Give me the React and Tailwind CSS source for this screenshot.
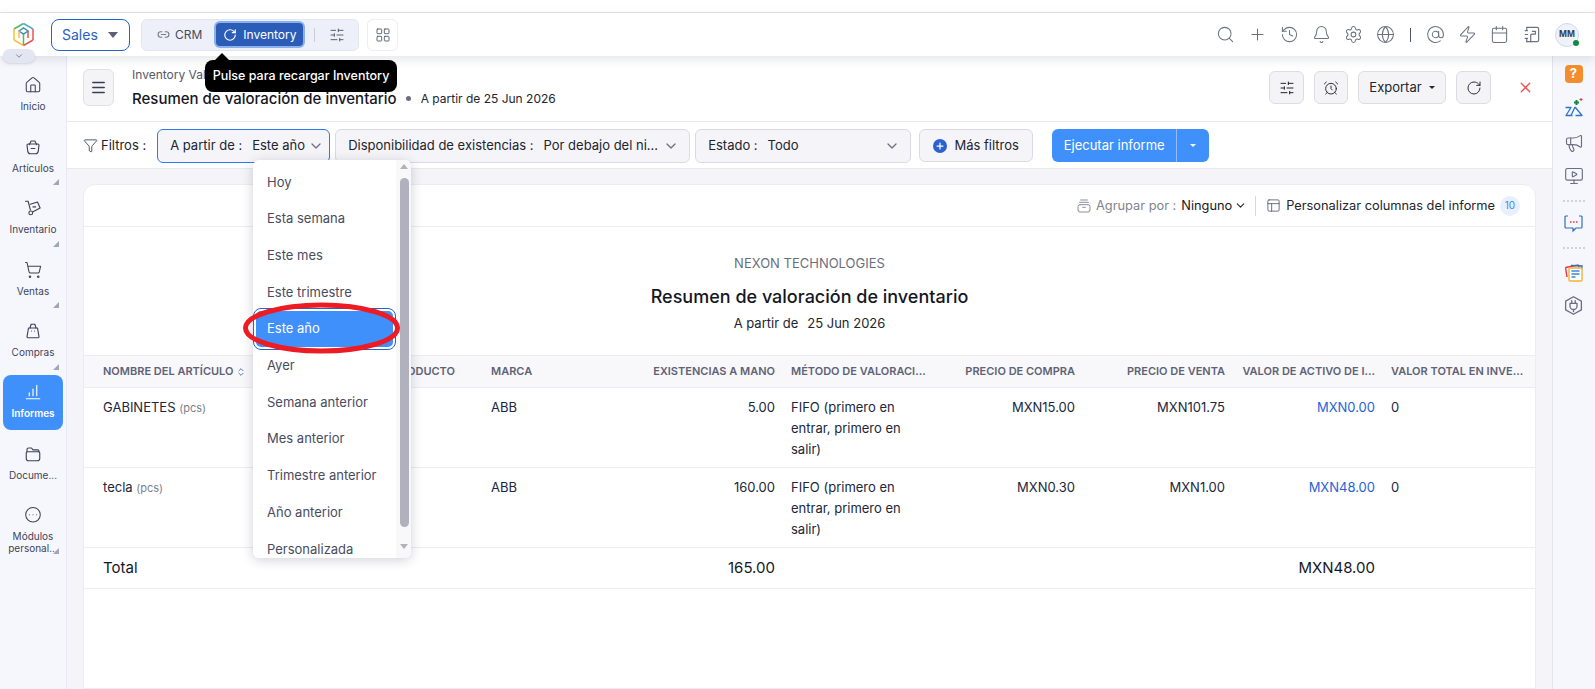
import React from "react";
import { Search, Plus, History, Bell, Settings, Globe, AtSign, Zap, Calendar, Home, ShoppingCart, CircleEllipsis, ChevronDown, ChevronsUpDown, Menu, SlidersHorizontal, AlarmClock, RotateCw, X, Filter, Link2, LayoutGrid, Megaphone, MonitorPlay, PanelsTopLeft } from "lucide-react";

const F = { fontFamily: "Inter, 'Noto Sans', sans-serif" };

const S = ({ children, size = 18, className = "" }) => (
  <svg width={size} height={size} viewBox="0 0 24 24" fill="none" stroke="currentColor" strokeWidth="1.5" strokeLinecap="round" strokeLinejoin="round" className={className}>{children}</svg>
);
const Basket = (p) => <S {...p}><path d="M7 9 9.5 4h5L17 9" /><path d="M4 9.5C4 8.7 4.7 8 5.5 8h13c.8 0 1.5.7 1.5 1.5l-1 8C18.800 19.5 17.5 21 15.5 21h-7C6.5 21 5.200 19.5 5 17.5Z" /><path d="M9.5 14h5" /></S>;
const Truck = (p) => <S {...p}><path d="M2 3h3.5l3 11.5" /><circle cx="9" cy="18.5" r="2.5" /><path d="M8.5 7 18 4l3.5 8-9.5 5" /><path d="M12 10.5h3.5" /></S>;
const Bag = (p) => <S {...p}><path d="M8 8 9.5 3h5L16 8" /><path d="M6 8h12l2 11.5A1.5 1.5 0 0 1 18.5 21h-13A1.5 1.5 0 0 1 4 19.5Z" /><path d="M10 12h.01M14 12h.01" /></S>;
const Bars = (p) => <S {...p}><path d="M3 21h18M7 17v-4M12 17V8M17 17V3" /></S>;
const FolderI = (p) => <S {...p}><path d="M4 9V6a2 2 0 0 1 2-2h4l2 2.5h6a2 2 0 0 1 2 2V9" /><path d="M3 10.5A1.5 1.5 0 0 1 4.5 9h15a1.5 1.5 0 0 1 1.5 1.5V18a3 3 0 0 1-3 3H6a3 3 0 0 1-3-3Z" /></S>;
const Note = (p) => <S {...p}><path d="M6 3h13a2 2 0 0 1 2 2v14a2 2 0 0 1-2 2H6" /><path d="M4 7h3M4 12h3M4 17h3M6 3v3M6 18v3" /><path d="M11 21v-8c0-1 .8-1.5 1.5-1.5H17V8h-4" /></S>;
const Drawer = (p) => <S {...p}><path d="M7 3h10M5.5 6.5h13" /><rect x="3" y="10" width="18" height="11" rx="3" /><path d="M10 14h4" /></S>;
const HexPlug = (p) => <S {...p}><path d="M12 2 21 7v10l-9 5-9-5V7Z" /><path d="M8 9.5h8v3a4 4 0 0 1-8 0ZM10 6.5v3M14 6.5v3M12 16.5V19" /></S>;

function NavItem({ icon: I, label, corner, active, two }) {
  return (
    <div className={`relative mx-[3px] flex flex-col items-center rounded-lg ${active ? "bg-[#4090fb] text-white font-semibold h-[55px] pt-[8px] mt-[5px] mb-[1px]" : "text-[#3f4359] pt-[14px] h-[61.5px]"}`}>
      <I size={18} strokeWidth={1.4} className={active ? "text-white" : "text-[#3d4156]"} />
      <div className="mt-[6px] text-[10px] leading-[12px] text-center">{label}</div>
      {two && <div className="text-[10px] leading-[12px] text-center">{two}</div>}
      {corner && <div className="absolute right-[4px] bottom-[0px] w-0 h-0 border-l-[6px] border-l-transparent border-b-[6px] border-b-[#9ea6b8]" />}
    </div>
  );
}

function Caret() {
  return <span className="inline-block w-0 h-0 border-x-[3px] border-x-transparent border-t-[3px] border-t-current" />;
}

function IconBtn({ children, w = "w-[35px]" }) {
  return <div className={`${w} h-[33px] flex items-center justify-center rounded-md border border-[#dcdde4] bg-[#f4f4f6] text-[#22242e]`}>{children}</div>;
}

function FilterBox({ className, label, value }) {
  return (
    <div className={`h-[34px] flex items-center justify-between rounded-md border border-[#d9dae3] bg-[#f5f5f9] pl-3 pr-[10px] text-[13px] text-[#22242e] ${className}`}>
      <span className="whitespace-nowrap">{label}<span className="ml-[10px]">{value}</span></span>
      <ChevronDown size={16} className="text-[#70737f] shrink-0" />
    </div>
  );
}

const cols = "grid grid-cols-[399px_300px_152px_148px_150px_150px_155px]";

function Row({ name, stock, buy, sell, asset, total }) {
  return (
    <div className={`${cols} h-[80px] border-b border-[#ecedf2] text-[13px] leading-[21px] text-[#21263c] pt-[9px]`}>
      <div className="pl-[19px]">{name} <span className="text-[11px] text-[#7b7f8f]">(pcs)</span></div>
      <div className="flex justify-between pr-2">
        <span className="pl-[8px]">ABB</span>
        <span>{stock}</span>
      </div>
      <div className="pl-2 pr-[24px]">FIFO (primero en entrar, primero en salir)</div>
      <div className="text-right pr-2">{buy}</div>
      <div className="text-right pr-2">{sell}</div>
      <div className="text-right pr-2 text-[#2563d6]">{asset}</div>
      <div className="pl-2">{total}</div>
    </div>
  );
}

export default function App() {
  const items = ["Hoy", "Esta semana", "Este mes", "Este trimestre", "Este año", "Ayer", "Semana anterior", "Mes anterior", "Trimestre anterior", "Año anterior", "Personalizada"];
  return (
    <div style={F} className="relative w-[1595px] h-[689px] overflow-hidden bg-white">
      <div className="h-[13px] border-b border-[#e4e4e8]" />
      {/* top bar */}
      <header className="relative z-20 h-[43px] flex items-center bg-white shadow-[0_3px_10px_rgba(40,45,70,0.13)]">
        <div className="w-[51px] flex justify-center pr-[4px] -mt-[1px]">
          <svg width="23" height="25" viewBox="0 0 23 25" fill="none" strokeWidth="1.5">
            <path d="M11.5 1.5 21 7" stroke="#5aa6c9" />
            <path d="M11.5 1.5 2 7" stroke="#53b567" />
            <path d="M2 7V18" stroke="#f0c23e" />
            <path d="M2 18 11.5 23.5" stroke="#f0c23e" />
            <path d="M11.5 23.5 21 18" stroke="#e8554e" />
            <path d="M21 7V18" stroke="#e8554e" />
            <path d="M7 9 11.5 6 16 9 11.5 12Z" stroke="#3f8fb0" />
            <path d="M11.5 12V23" stroke="#53b567" />
            <path d="M7 9v7" stroke="#f0c23e" />
            <path d="M16 9v7" stroke="#e8554e" />
          </svg>
        </div>
        <div className="w-[79px] h-[32px] flex items-center justify-between rounded-lg border border-[#2563c9] px-[10px] text-[14px] text-[#2b62c0]">
          Sales
          <span className="w-0 h-0 mr-[1px] border-x-[5px] border-x-transparent border-t-[6px] border-t-[#5c6072]" />
        </div>
        <div className="ml-[11px] w-[218px] h-[32px] flex items-center rounded-md bg-[#edf0f9] border border-[#e2e6f3] text-[12px] text-[#484c5e]">
          <Link2 size={13} className="ml-[15px] text-[#777b8b]" />
          <span className="ml-[5px]">CRM</span>
          <div className="ml-[14px] w-[87px] h-[23px] flex items-center rounded-[4px] bg-[#2b5cb8] ring-2 ring-[#8db0ea] text-white">
            <RotateCw size={14} strokeWidth={2} className="ml-[7px] mr-[6px]" />
            Inventory
          </div>
          <div className="ml-[11px] h-[14px] w-px bg-[#c8ccd8]" />
          <SlidersHorizontal size={16} strokeWidth={1.4} className="ml-[14px] text-[#50546a]" />
        </div>
        <div className="ml-[8px] w-[31px] h-[32px] flex items-center justify-center rounded-md border border-[#eeeef2]">
          <LayoutGrid size={16} strokeWidth={1.3} className="text-[#4e5265]" />
        </div>
        <div className="ml-auto flex items-center gap-[13px] pr-[16px] text-[#6e7280]">
          <Search size={19} strokeWidth={1.3} />
          <Plus size={19} strokeWidth={1.3} />
          <History size={19} strokeWidth={1.3} />
          <Bell size={19} strokeWidth={1.3} />
          <Settings size={19} strokeWidth={1.3} />
          <Globe size={19} strokeWidth={1.3} />
          <div className="mx-[2px] w-px h-[14px] bg-[#50546a]" />
          <AtSign size={19} strokeWidth={1.3} />
          <Zap size={19} strokeWidth={1.3} />
          <Calendar size={19} strokeWidth={1.3} />
          <Note size={19} />
          <div className="relative ml-[1px] w-[24px] h-[24px] rounded-full bg-[#eef2fb] border border-[#cfd9f0] flex items-center justify-center text-[8.5px] font-bold text-[#3a3e50]">
            MM
            <span className="absolute right-[-1px] bottom-[0px] w-[6px] h-[6px] rounded-full bg-[#0f8a45]" />
          </div>
        </div>
      </header>

      <div className="flex h-[633px]">
        {/* left nav */}
        <aside className="relative w-[67px] shrink-0 bg-[#f6f7fd] border-r border-[#e8e9f4] pt-[6px]">
          <div className="absolute left-[3px] -top-[7px] z-30 w-[32px] h-[14px] rounded-full bg-[#e2e6f2] shadow-sm flex items-center justify-center">
            <ChevronDown size={10} className="text-[#70737f]" />
          </div>
          <NavItem icon={Home} label="Inicio" />
          <NavItem icon={Basket} label="Artículos" corner />
          <NavItem icon={Truck} label="Inventario" corner />
          <NavItem icon={ShoppingCart} label="Ventas" corner />
          <NavItem icon={Bag} label="Compras" corner />
          <NavItem icon={Bars} label="Informes" active />
          <NavItem icon={FolderI} label="Docume..." />
          <NavItem icon={CircleEllipsis} label="Módulos" two="personal..." corner />
        </aside>

        {/* main */}
        <main className="flex-1 min-w-0 flex flex-col">
          <div className="h-[66px] shrink-0 flex items-center border-b border-[#e8e9f0] pl-[16px] pr-[18px] pb-[2px]">
            <div className="w-[31px] h-[37px] flex items-center justify-center rounded-md border border-[#e0e1e6] bg-[#f4f4f6]">
              <Menu size={17} strokeWidth={2.2} className="text-[#3a3d55]" />
            </div>
            <div className="ml-[18px]">
              <div className="text-[12px] leading-[16px] text-[#555868]">Inventory Valuation Summary</div>
              <div className="mt-[6px] flex items-center leading-[20px]">
                <span className="text-[15px] font-medium text-[#15171f]">Resumen de valoración de inventario</span>
                <span className="ml-[9px] w-[5px] h-[5px] rounded-full bg-[#6b6f7d]" />
                <span className="ml-[10px] text-[12px] text-[#22242e]">A partir de 25 Jun 2026</span>
              </div>
            </div>
            <div className="ml-auto flex items-center">
              <IconBtn><SlidersHorizontal size={16} strokeWidth={1.5} /></IconBtn>
              <div className="ml-[10px]"><IconBtn w="w-[34px]"><AlarmClock size={16} strokeWidth={1.4} /></IconBtn></div>
              <div className="ml-[10px]">
                <IconBtn w="w-[88px]"><span className="text-[13px]">Exportar</span><span className="ml-[7px] flex"><Caret /></span></IconBtn>
              </div>
              <div className="ml-[10px]"><IconBtn w="w-[35px]"><RotateCw size={16} strokeWidth={1.4} /></IconBtn></div>
              <X size={17} strokeWidth={1.8} className="ml-[26px] text-[#ee4b50]" />
            </div>
          </div>

          <div className="h-[47px] shrink-0 flex items-center border-b border-[#e8e9f0] pl-[16px] pt-[1px]">
            <Filter size={15} strokeWidth={1.4} className="text-[#3a3d55]" />
            <span className="ml-[3px] text-[13px] text-[#22242e]">Filtros :</span>
            <FilterBox className="ml-[11px] w-[173px] !border-[#2b7af0] !pr-[5px]" label="A partir de :" value="Este año" />
            <FilterBox className="ml-[5px] w-[355px]" label="Disponibilidad de existencias :" value="Por debajo del ni..." />
            <FilterBox className="ml-[5px] w-[216px]" label="Estado :" value="Todo" />
            <div className="ml-[8px] w-[114px] h-[33px] flex items-center justify-center rounded-md border border-[#d9dae3] bg-[#f5f5f9] text-[13px] text-[#22242e]">
              <span className="w-[14px] h-[14px] mr-[7px] rounded-full bg-[#2b62d0] flex items-center justify-center">
                <Plus size={10} strokeWidth={3} className="text-white" />
              </span>
              Más filtros
            </div>
            <div className="ml-[19px] w-[157px] h-[33px] flex items-center rounded-md bg-[#4090fb] text-[13px] text-white">
              <span className="w-[125px] text-center border-r border-[#8fbdfb] leading-[33px]">Ejecutar informe</span>
              <span className="flex-1 flex justify-center"><Caret /></span>
            </div>
          </div>

          <div className="flex-1 min-h-0 bg-[#f4f4f9] px-[16px] pt-[15px]">
            <div className="h-full rounded-t-xl border border-[#ecedf2] bg-white">
              <div className="h-[42px] flex items-center justify-end border-b border-[#ecedf2] pr-[15px] text-[12.8px]">
                <Drawer size={16} className="text-[#8b8e9c] mr-[4px]" />
                <span className="text-[#80838f]">Agrupar por :</span>
                <span className="ml-[5px] text-[#15171f]">Ninguno</span>
                <ChevronDown size={13} className="ml-[2px] text-[#22242e]" />
                <div className="ml-[8px] mr-[10px] h-[20px] w-px bg-[#d5d7e0]" />
                <PanelsTopLeft size={15} strokeWidth={1.3} className="mr-[5px] text-[#50546a]" />
                <span className="text-[#22242e]">Personalizar columnas del informe</span>
                <span className="ml-[5px] w-[20px] h-[20px] flex items-center justify-center rounded-full bg-[#e8f0fd] text-[10px] text-[#3f86f0]">10</span>
              </div>

              <div className="h-[128px] flex flex-col items-center">
                <div className="mt-[28px] text-[13px] leading-[16px] text-[#6b6f7e]">NEXON TECHNOLOGIES</div>
                <div className="mt-[14px] text-[18px] leading-[24px] font-medium text-[#15171f]">Resumen de valoración de inventario</div>
                <div className="mt-[6px] text-[13px] leading-[16px] text-[#22242e]">A partir de<span className="ml-[9px]">25 Jun 2026</span></div>
              </div>

              <div className={`${cols} h-[33px] items-center border-y border-[#ecedf2] bg-[#f8f8fb] text-[11px] font-semibold text-[#5f6275]`}>
                <div className="pl-[19px] flex items-center justify-between pr-[28px]">
                  <span className="flex items-center gap-[3px]">NOMBRE DEL ARTÍCULO <ChevronsUpDown size={10} className="text-[#3d5a9e]" /></span>
                  <span>PRODUCTO</span>
                </div>
                <div className="flex justify-between pr-2">
                  <span className="pl-[8px]">MARCA</span>
                  <span>EXISTENCIAS A MANO</span>
                </div>
                <div className="px-2 whitespace-nowrap">MÉTODO DE VALORACI...</div>
                <div className="text-right pr-2">PRECIO DE COMPRA</div>
                <div className="text-right pr-2">PRECIO DE VENTA</div>
                <div className="text-right pr-2 whitespace-nowrap">VALOR DE ACTIVO DE I...</div>
                <div className="pl-2 whitespace-nowrap">VALOR TOTAL EN INVE...</div>
              </div>
              <Row name="GABINETES" stock="5.00" buy="MXN15.00" sell="MXN101.75" asset="MXN0.00" total="0" />
              <Row name="tecla" stock="160.00" buy="MXN0.30" sell="MXN1.00" asset="MXN48.00" total="0" />
              <div className={`${cols} h-[41px] items-center border-b border-[#ecedf2] text-[15px] text-[#15171f]`}>
                <div className="pl-[19px]">Total</div>
                <div className="text-right pr-2">165.00</div>
                <div /><div /><div />
                <div className="text-right pr-2">MXN48.00</div>
                <div />
              </div>
            </div>
          </div>
        </main>

        {/* right rail */}
        <aside className="w-[43px] shrink-0 bg-[#f6f7fd] border-l border-[#e3e4ee] flex flex-col items-center pt-[9px] pr-[1px] text-[#6b6f85]">
          <div className="w-[18px] h-[18px] rounded-[4px] bg-[#f58d2e] flex items-center justify-center text-[13px] font-bold text-white">?</div>
          <svg className="mt-[15px]" width="20" height="20" viewBox="0 0 20 20" fill="none">
            <path d="M1.5 9.5H7L2 17.5H8.5M11 9l-4 8.5M11 9l7 8.5H11.5" stroke="#2f74c4" strokeWidth="1.3" strokeLinejoin="round" />
            <path d="M10 4.5h5M12.5 2v5" stroke="#0f8a45" strokeWidth="2" />
            <path d="M15.5 1.5h3M17 0v3" stroke="#e8343c" strokeWidth="1" />
          </svg>
          <Megaphone size={20} strokeWidth={1.4} className="mt-[15px]" />
          <MonitorPlay size={20} strokeWidth={1.4} className="mt-[13px]" />
          <div className="mt-[14px] w-[22px] border-t-2 border-dotted border-[#cfd1dc]" />
          <svg className="mt-[12px]" width="19" height="19" viewBox="0 0 19 19" fill="none">
            <path d="M4 2H2a1 1 0 0 0-1 1v10a1 1 0 0 0 1 1h7v3l3-3h5a1 1 0 0 0 1-1V3a1 1 0 0 0-1-1h-2" stroke="#2f6fc0" strokeWidth="1.2" />
            <path d="M6 8h1.5M9 8h1.5M12 8h1.5" stroke="#e8343c" strokeWidth="1.6" />
          </svg>
          <div className="mt-[14px] w-[22px] border-t-2 border-dotted border-[#cfd1dc]" />
          <svg className="mt-[14px]" width="20" height="19" viewBox="0 0 20 19" fill="none">
            <path d="M1.5 4.5 14 2l1 2" stroke="#e8343c" strokeWidth="1.4" />
            <path d="M1.5 4.5 3 14" stroke="#e8343c" strokeWidth="1.4" />
            <path d="M7 2.5 18 3l-.5 4" stroke="#2f6fc0" strokeWidth="1.4" />
            <rect x="5" y="5" width="13" height="13" rx="1" fill="#fff" stroke="#f2b33a" strokeWidth="1.4" />
            <path d="M7.5 8h8M7.5 11h8M7.5 14h4" stroke="#3f86d8" strokeWidth="1.6" />
          </svg>
          <HexPlug size={21} className="mt-[13px]" />
        </aside>
      </div>

      {/* tooltip */}
      <div className="absolute z-40 left-[205px] top-[60px] w-[192px] h-[32px] rounded-lg bg-black text-white text-[12.5px] font-medium flex items-center justify-center whitespace-nowrap">
        <span className="absolute left-[10px] -top-[7px] w-0 h-0 border-x-[7px] border-x-transparent border-b-[7px] border-b-black" />
        Pulse para recargar Inventory
      </div>

      {/* dropdown */}
      <div className="absolute z-30 left-[253px] top-[160px] w-[158px] h-[398px] overflow-hidden rounded-md bg-white shadow-[0_2px_12px_rgba(40,45,70,0.22)]">
        <div className="absolute right-0 top-0 bottom-0 w-[15px] bg-[#f8f8fb]" />
        <div className="absolute right-[2px] top-[18px] w-[9px] h-[349px] rounded-full bg-[#b1b0bd]" />
        <div className="absolute right-[3px] top-[4px] w-0 h-0 border-x-[4px] border-x-transparent border-b-[5px] border-b-[#b1b0bd]" />
        <div className="absolute right-[3px] bottom-[9px] w-0 h-0 border-x-[4px] border-x-transparent border-t-[5px] border-t-[#b1b0bd]" />
        <div className="w-[143px] pt-[4px]">
          {items.map((t, i) =>
            i === 4 ? (
              <div key={t} className="relative -my-[2.65px] h-[42px] rounded-lg border-[1.5px] border-[#2563c9] bg-white p-[2px]">
                <div className="h-full flex items-center pl-[11px] rounded-[5px] bg-[#4090fb] text-white text-[13px]">{t}</div>
              </div>
            ) : (
              <div key={t} className="h-[36.7px] flex items-center pl-[14px] text-[13px] text-[#484c5e]">{t}</div>
            )
          )}
        </div>
      </div>

      {/* hand-drawn annotation */}
      <svg className="absolute z-40 left-[239px] top-[300px]" width="165" height="56" viewBox="0 0 165 56" fill="none">
        <ellipse cx="82.5" cy="28" rx="76" ry="23" stroke="#ed1c24" strokeWidth="5" />
      </svg>
    </div>
  );
}
